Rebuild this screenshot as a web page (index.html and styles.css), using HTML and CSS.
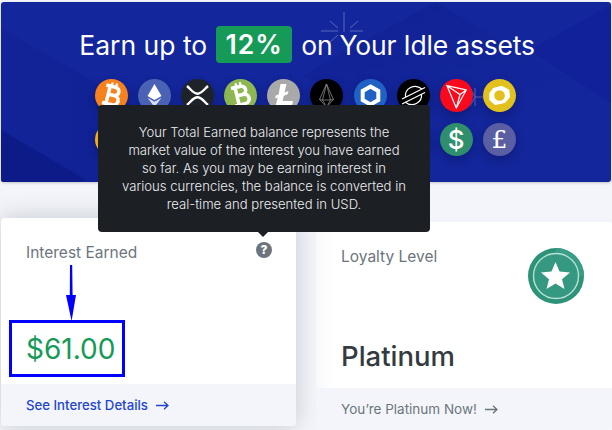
FILE: index.html
```html
<!DOCTYPE html>
<html lang="en">
<head>
    <meta charset="UTF-8">
    <title>Interest Earned</title>
    <link rel="stylesheet" href="styles.css">
</head>
<body>
    <div class="page">
        <div class="banner">
            <svg class="banner-art" width="610" height="180" viewBox="0 0 610 180">
                <defs>
                    <linearGradient id="fadeLeft" x1="0" y1="0" x2="1" y2="0">
                        <stop offset="0" stop-color="#0e1f90" stop-opacity=".35"/>
                        <stop offset="1" stop-color="#0e1f90"/>
                    </linearGradient>
                    <linearGradient id="fadeRight" x1="0" y1="0" x2="0.6" y2="1">
                        <stop offset="0" stop-color="#0f2092"/>
                        <stop offset="1" stop-color="#13269b" stop-opacity="0"/>
                    </linearGradient>
                </defs>
                <polygon points="0,26 99,83 260,180 0,180" fill="url(#fadeLeft)"/>
                <polygon points="0,128 85,178 78,180 0,180" fill="#0c1b88"/>
                <polygon points="434,0 300,74 570,180 610,180 610,101" fill="url(#fadeRight)"/>
                <polygon points="610,3 529,48 610,101" fill="#10219a"/>
                <g class="spark">
                    <path d="M343 10V30M320 29H337M349 29H362M329 19L337 26M357 19L349 26M329 40L337 33"/>
                    <path d="M474 95H482M474 95L469 86M474 95L469 104M474 86V104"/>
                </g>
            </svg>
            <h1 class="banner-title"><span class="lead">Earn up to</span> <span class="rate">12%</span> on Your Idle assets</h1>
            <div class="coins">
                <div class="coin btc"><svg viewBox="0 0 33 33"><use href="#bitcoin" transform="rotate(14 16.5 16.5)"/></svg></div>
                <div class="coin eth"><svg viewBox="0 0 33 33"><path class="fill" d="M16.5 5L23.5 17L16.5 21L9.5 17Z"/><path class="fill" d="M9.5 18.8L16.5 22.8L23.5 18.8L16.5 28Z" opacity=".8"/></svg></div>
                <div class="coin xrp"><svg viewBox="0 0 33 33"><path class="line" d="M6 7C10 10.5 12.5 14.7 16.5 14.7S23 10.5 27 7M6 26C10 22.5 12.5 18.3 16.5 18.3S23 22.5 27 26"/></svg></div>
                <div class="coin bch"><svg viewBox="0 0 33 33"><use href="#bitcoin" transform="rotate(-14 16.5 16.5)"/></svg></div>
                <div class="coin ltc"><svg viewBox="0 0 33 33"><path class="fill" d="M13.5 5H19.5L17.6 13.5L21.5 12L20.6 15.2L16.8 16.7L15.6 22H26L24.8 27H8.5L10.8 18.4L8 19.5L8.8 16.5L11.6 15.4Z"/></svg></div>
                <div class="coin eos"><svg viewBox="0 0 33 33"><path class="thin" d="M16.5 5L9.5 20.5L16.5 28L23.5 20.5ZM16.5 5L12.5 21L16.5 28L20.5 21ZM9.5 20.5L12.5 21H20.5L23.5 20.5"/></svg></div>
                <div class="coin link"><svg viewBox="0 0 33 33"><path class="hex" d="M16.5 7.5L24.3 12V21L16.5 25.5L8.7 21V12Z"/></svg></div>
                <div class="coin xlm"><svg viewBox="0 0 33 33"><path class="line-thin" d="M5 20L28 8.5M5 25L28 13.5M8.5 18C7.5 9.5 17.5 4 25 10M24.5 15C25.5 23.5 15.5 29 8 23"/></svg></div>
                <div class="coin trx"><svg viewBox="0 0 33 33"><path class="line-thin" d="M7 6.7L26.3 11L16.3 29ZM7 6.7L20 15.5L26.3 11M20 15.5L16.3 29M7 6.7L16.3 29"/></svg></div>
                <div class="coin pax"><svg viewBox="0 0 33 33"><path class="fill" fill-rule="evenodd" d="M10.3 9L18.7 6.8L26.3 10.8L27 18L22 24L12 26L6.3 21L6.3 14ZM16.5 11.2A5.3 5.3 0 1 0 16.6 21.8A5.3 5.3 0 1 0 16.5 11.2Z"/></svg></div>
            </div>
            <div class="coins">
                <div class="coin dai"></div>
                <div class="coin"></div>
                <div class="coin"></div>
                <div class="coin"></div>
                <div class="coin"></div>
                <div class="coin"></div>
                <div class="coin"></div>
                <div class="coin"></div>
                <div class="coin usd">$</div>
                <div class="coin gbp">£</div>
            </div>
        </div>

        <div class="cards">
            <div class="card card-interest">
                <div class="card-body">
                    <div class="card-top">
                        <span class="card-label">Interest Earned</span>
                        <span class="help">?</span>
                    </div>
                    <div class="amount">$61.00</div>
                </div>
                <div class="card-foot foot-link">See Interest Details
                    <svg class="arrow" width="13" height="9" viewBox="0 0 13 9"><path d="M0 4.5H12M8 .7L12 4.5L8 8.3"/></svg>
                </div>
            </div>
            <div class="card card-loyalty">
                <div class="card-body">
                    <div class="card-top">
                        <span class="card-label">Loyalty Level</span>
                        <svg class="badge" width="56" height="56" viewBox="0 0 56 56">
                            <circle cx="28" cy="28" r="28" fill="#2e9279"/>
                            <path d="M28 0A28 28 0 0 1 56 28L28 28Z" fill="#3a9e86"/>
                            <circle cx="28" cy="28" r="22.5" fill="#359881" stroke="#b5e0d3" stroke-width="1.4"/>
                            <path d="M27.5 14L31.5 23.6L42 24.4L34 31.3L36.5 41L27.5 35.6L18.5 41L21 31.3L13 24.4L23.5 23.6Z" fill="#fff"/>
                        </svg>
                    </div>
                    <div class="level">Platinum</div>
                </div>
                <div class="card-foot">You’re Platinum Now!
                    <svg class="arrow" width="13" height="9" viewBox="0 0 13 9"><path d="M0 4.5H12M8 .7L12 4.5L8 8.3"/></svg>
                </div>
            </div>
        </div>

        <!-- callout arrow on the screenshot -->
        <svg class="callout" width="14" height="58" viewBox="0 0 14 58">
            <path d="M6 0H8.2L8.6 30H12L7.6 56L2 30H5.8Z" fill="#0000ff"/>
        </svg>

        <div class="tooltip">
            Your Total Earned balance represents the<br>
            market value of the interest you have earned<br>
            so far. As you may be earning interest in<br>
            various currencies, the balance is converted in<br>
            real-time and presented in USD.
        </div>
    </div>

    <svg width="0" height="0" class="defs">
        <symbol id="bitcoin" viewBox="0 0 33 33">
            <path fill="none" stroke="#fff" stroke-width="3.6" d="M9 7.5H18C24.5 7.5 24.5 16 18 16H12.5M12.5 16H19C26 16 26 25.5 19 25.5H9M13 7.5V25.5"/>
            <path fill="none" stroke="#fff" stroke-width="2.2" d="M14.5 3.5V7M19 3.5V7M14.5 26V29.5M19 26V29.5"/>
        </symbol>
    </svg>
</body>
</html>
```

FILE: styles.css
```css
* {
    margin: 0;
    padding: 0;
    box-sizing: border-box;
}

body {
    font-family: 'Inter', 'Lato', sans-serif;
    background: #f3f5fa;
    width: 612px;
    height: 430px;
    overflow: hidden;
}

.page {
    position: relative;
    width: 612px;
    height: 430px;
    padding: 2px 0 0 1px;
    overflow: hidden;
}

.defs {
    position: absolute;
}

.banner {
    position: relative;
    width: 610px;
    height: 180px;
    padding-top: 24px;
    background: #13269b;
    border-radius: 3px;
    overflow: hidden;
    box-shadow: 0 1px 3px rgba(0,0,0,0.2);
}

.banner-art {
    position: absolute;
    top: 0;
    left: 0;
}

.spark path {
    fill: none;
    stroke: #5a69bb;
    stroke-width: 1;
}

.banner-title {
    position: relative;
    height: 37px;
    display: flex;
    align-items: center;
    justify-content: center;
    gap: 9px;
    padding-left: 2px;
    color: white;
    font-size: 26.5px;
    font-weight: 400;
    letter-spacing: -0.2px;
    white-space: nowrap;
}

.lead {
    letter-spacing: 0;
}

.rate {
    width: 76px;
    height: 37px;
    line-height: 37px;
    text-align: center;
    background: #169a58;
    border-radius: 4px;
    font-weight: 600;
    letter-spacing: 1px;
}

.coins {
    position: relative;
    display: flex;
    gap: 10.1px;
    margin: 16px 0 0 94px;
}

.coins + .coins {
    margin-top: 11px;
}

.coin {
    width: 33px;
    height: 33px;
    border-radius: 50%;
    background: #333;
    color: white;
    text-align: center;
    box-shadow: 0 4px 10px rgba(0,0,30,0.25);
}

.coin svg {
    display: block;
    width: 33px;
    height: 33px;
}

.fill {
    fill: #fff;
}

.line {
    fill: none;
    stroke: #fff;
    stroke-width: 2.4;
}

.line-thin {
    fill: none;
    stroke: #fff;
    stroke-width: 1.2;
}

.thin {
    fill: none;
    stroke: #999;
    stroke-width: 0.7;
}

.hex {
    fill: none;
    stroke: #fff;
    stroke-width: 4;
}

.btc { background: #f7811a; }
.eth { background: #4a62b3; }
.xrp { background: #1e2329; }
.bch { background: #8cb84f; }
.ltc { background: #a9a9a9; }
.eos { background: #000; }
.link { background: #2061c4; }
.xlm { background: #000; }
.trx { background: #f80a1c; }
.pax { background: #e3c11c; }
.dai { background: #f5ac1b; }

.usd {
    background: #2f8e6b;
    font-size: 26px;
    line-height: 33px;
    font-weight: 500;
}

.gbp {
    background: #5a5ea2;
    font-family: 'DejaVu Serif', 'Liberation Serif', serif;
    font-size: 25px;
    line-height: 33px;
}

.cards {
    display: flex;
    align-items: flex-start;
    gap: 20px;
    margin-top: 36px;
}

.card {
    height: 208px;
    display: flex;
    flex-direction: column;
    background: white;
    border-radius: 4px;
    overflow: hidden;
}

.card-interest {
    width: 295px;
    box-shadow: 0 0 24px rgba(60,70,90,0.26);
}

.card-loyalty {
    width: 296px;
    margin-top: 4px;
    background: linear-gradient(90deg, #f8f9fb, #fff 18px);
}

.card-body {
    flex: 1;
    padding: 0 25px;
    display: flex;
    flex-direction: column;
}

.card-top {
    display: flex;
    justify-content: space-between;
    align-items: flex-start;
}

.card-label {
    color: #6c757d;
    font-size: 15.5px;
    line-height: 20px;
}

.card-interest .card-top {
    padding-top: 25px;
}

.help {
    width: 16px;
    height: 16px;
    margin-top: -1px;
    margin-right: -1px;
    border-radius: 50%;
    background: #6c757d;
    color: white;
    font-size: 12px;
    font-weight: 800;
    line-height: 16px;
    text-align: center;
}

.card-loyalty .card-top {
    padding-top: 25px;
}

.amount {
    width: 116px;
    height: 57px;
    margin: 57px 0 0 -17px;
    padding-left: 14px;
    border: 3px solid #0000ff;
    color: #169a58;
    font-size: 28px;
    line-height: 53px;
}

.badge {
    margin: 1px 3px 0 0;
}

.level {
    margin-top: 34px;
    color: #343a40;
    font-size: 27.5px;
    font-weight: 500;
    line-height: 36px;
}

.card-foot {
    height: 42px;
    display: flex;
    align-items: center;
    gap: 8px;
    padding-left: 25px;
    background: #f3f5fa;
    color: #6c757d;
    font-size: 13.5px;
}

.foot-link {
    color: #2346cf;
    font-size: 13.2px;
    font-weight: 500;
}

.arrow path {
    fill: none;
    stroke: currentColor;
    stroke-width: 1.3;
}

.callout {
    position: absolute;
    top: 265px;
    left: 64px;
}

.tooltip {
    position: absolute;
    top: 105px;
    left: 98px;
    width: 332px;
    height: 127px;
    padding-top: 18px;
    background: #1c1f24;
    border-radius: 4px;
    color: #eceef0;
    font-size: 13.1px;
    font-weight: 300;
    line-height: 18px;
    text-align: center;
}

.tooltip::after {
    content: "";
    position: absolute;
    top: 127px;
    left: 160px;
    border: 5px solid transparent;
    border-top-color: #1c1f24;
    border-bottom: 0;
}
```
